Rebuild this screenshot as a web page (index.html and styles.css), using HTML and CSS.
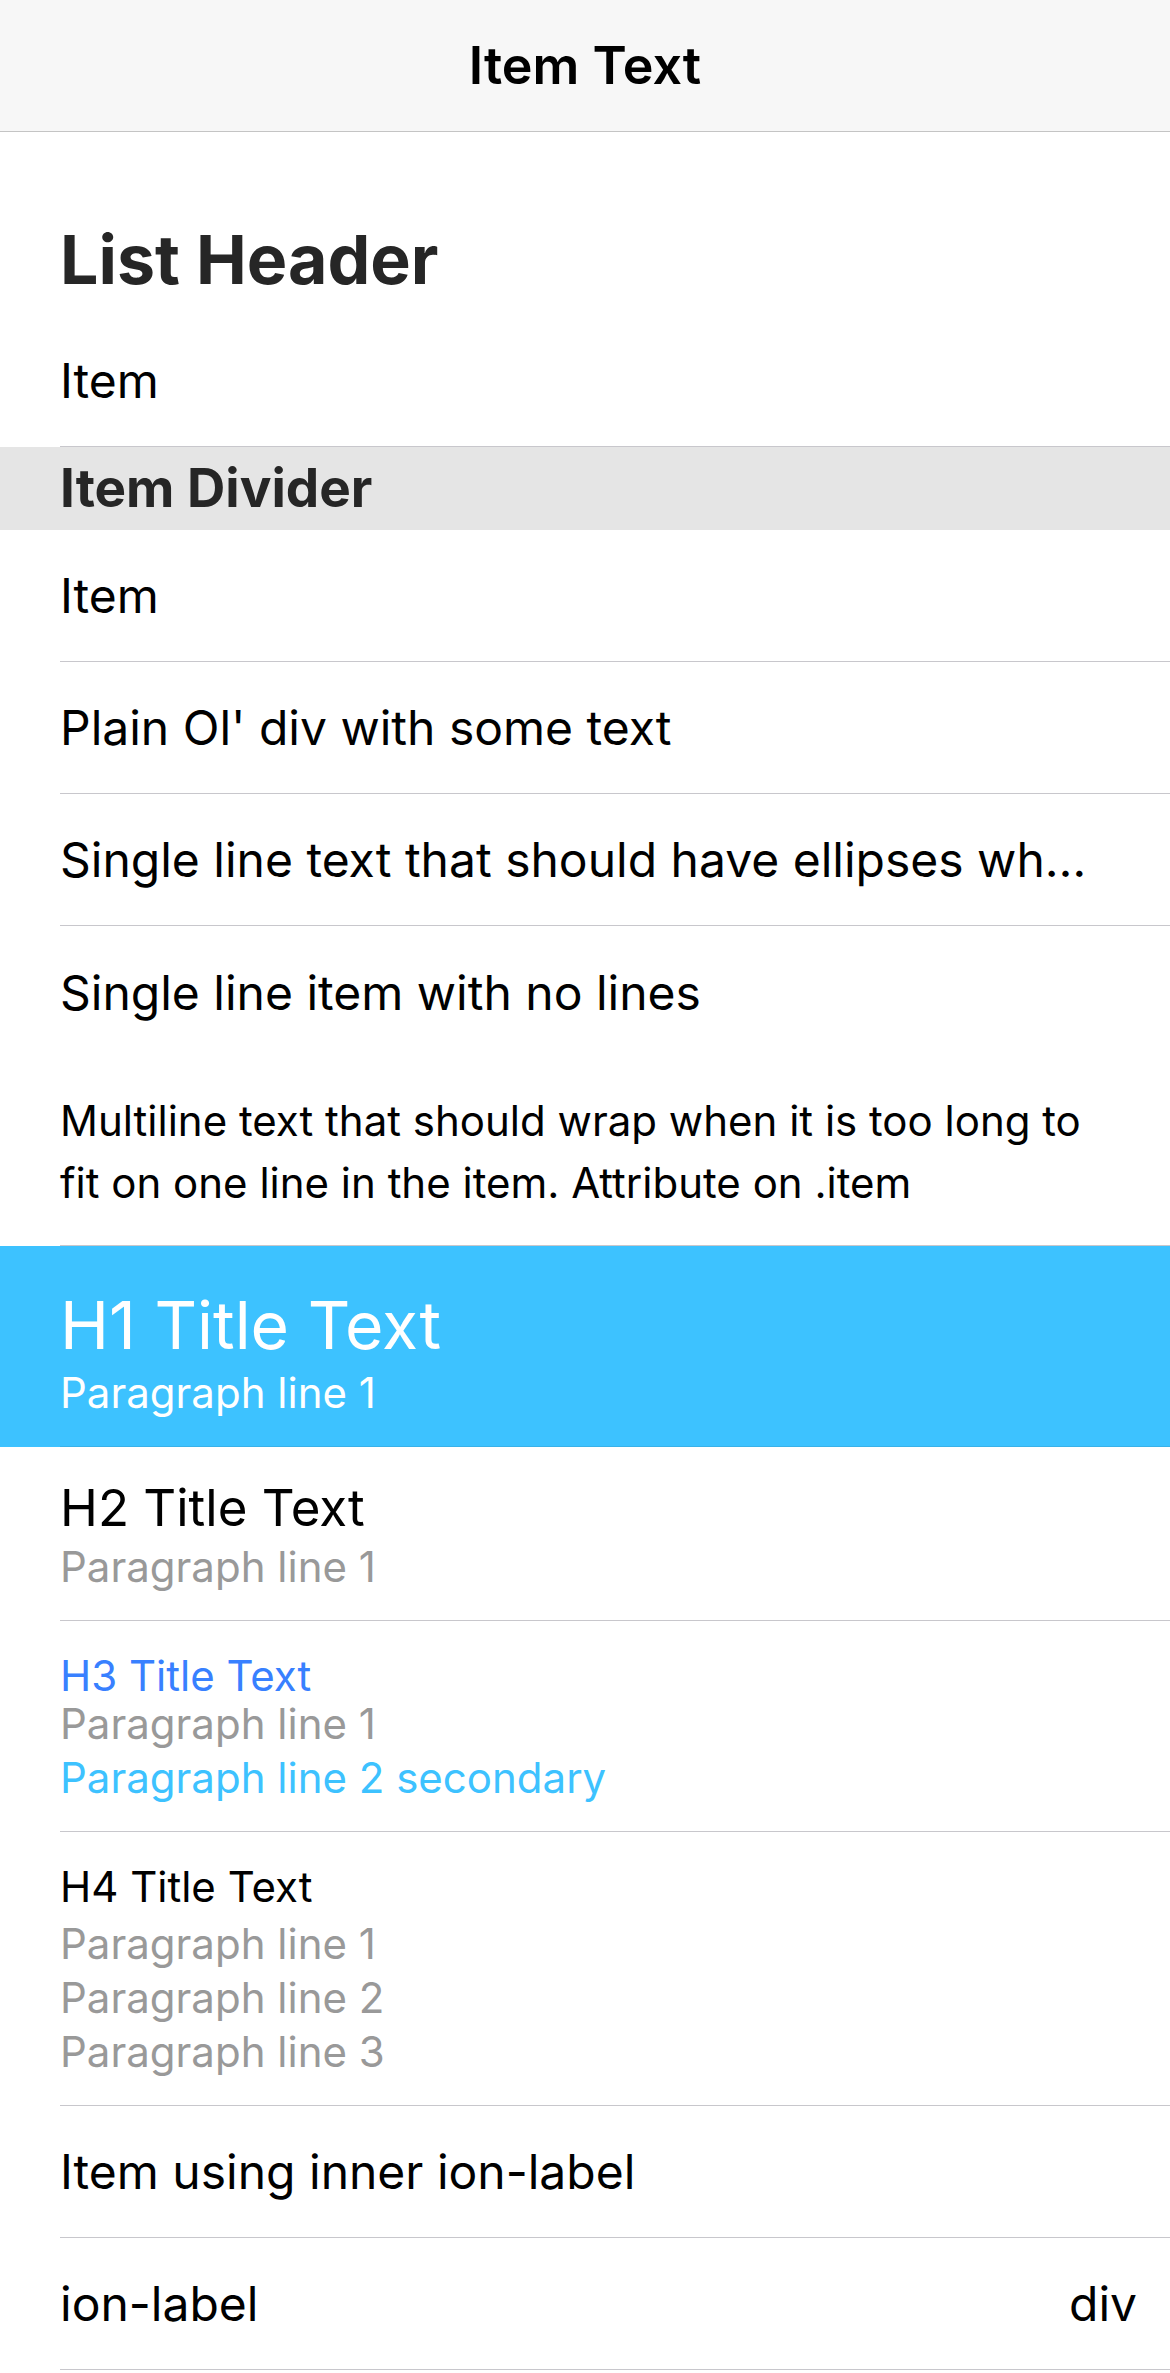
FILE: index.html
```html
<!DOCTYPE html>
<html lang="en">
<head>
<meta charset="utf-8">
<title>Item Text</title>
<link rel="stylesheet" href="styles.css">
</head>
<body>
<header class="toolbar">
  <div class="toolbar-title">Item Text</div>
</header>
<main class="content">
  <div class="list">
    <div class="list-header">List Header</div>
    <div class="item"><div class="inner"><span class="label">Item</span></div></div>
    <div class="item-divider">Item Divider</div>
    <div class="item"><div class="inner"><span class="label">Item</span></div></div>
    <div class="item"><div class="inner"><span class="label">Plain Ol' div with some text</span></div></div>
    <div class="item"><div class="inner"><span class="label">Single line text that should have ellipses when it doesn't fit in the item</span></div></div>
    <div class="item no-lines"><div class="inner"><span class="label">Single line item with no lines</span></div></div>
    <div class="item"><div class="inner wrap"><span class="label">Multiline text that should wrap when it is too long to fit on one line in the item. Attribute on .item</span></div></div>
    <div class="item item-secondary"><div class="inner multi">
      <h1 class="t1">H1 Title Text</h1>
      <p class="para">Paragraph line 1</p>
    </div></div>
    <div class="item"><div class="inner multi">
      <h2 class="t2">H2 Title Text</h2>
      <p class="para">Paragraph line 1</p>
    </div></div>
    <div class="item"><div class="inner multi">
      <h3 class="t3">H3 Title Text</h3>
      <p class="para">Paragraph line 1</p>
      <p class="para secondary">Paragraph line 2 secondary</p>
    </div></div>
    <div class="item"><div class="inner multi">
      <h4 class="t4">H4 Title Text</h4>
      <p class="para">Paragraph line 1</p>
      <p class="para">Paragraph line 2</p>
      <p class="para">Paragraph line 3</p>
    </div></div>
    <div class="item"><div class="inner"><span class="label">Item using inner ion-label</span></div></div>
    <div class="item"><div class="inner split"><span class="label">ion-label</span><span class="end">div</span></div></div>
  </div>
</main>
</body>
</html>
```

FILE: styles.css
```css
html, body {
  margin: 0;
  padding: 0;
  background: #ffffff;
}

body {
  font-family: "Inter", "Liberation Sans", sans-serif;
  color: #000000;
  -webkit-font-smoothing: antialiased;
}

.toolbar {
  height: 131px;
  background: #f7f7f7;
  border-bottom: 1px solid #c4c4c4;
  display: flex;
  align-items: center;
  justify-content: center;
}

.toolbar-title {
  font-size: 52px;
  font-weight: 600;
  line-height: 131px;
  color: #000;
}

.list-header {
  padding: 86px 60px 15px 60px;
  font-size: 68px;
  font-weight: 700;
  line-height: 82px;
  color: #262626;
}

.item {
  padding-left: 60px;
  background: #fff;
}

.inner {
  min-height: 131px;
  border-bottom: 1px solid #c8c7cc;
  display: flex;
  align-items: center;
  padding-right: 72px;
  font-size: 48px;
  line-height: 131px;
}

.label {
  min-width: 0;
  white-space: nowrap;
  overflow: hidden;
  text-overflow: ellipsis;
}

.no-lines .inner {
  border-bottom: none;
  min-height: 132px;
}

.inner.wrap {
  display: block;
  min-height: 0;
  padding-top: 32px;
  padding-bottom: 31px;
  font-size: 42px;
  line-height: 62px;
}

.inner.wrap .label {
  white-space: normal;
  overflow: visible;
}

.inner.split {
  justify-content: space-between;
  padding-right: 33px;
}

.item-divider {
  height: 83px;
  padding-left: 60px;
  background: #e5e5e5;
  font-size: 53px;
  font-weight: 700;
  line-height: 83px;
  color: #262626;
}

.inner.multi {
  display: block;
  min-height: 0;
  padding-top: 32px;
  padding-bottom: 24px;
  line-height: normal;
}

.t1, .t2, .t3, .t4, .para {
  margin: 0;
  font-weight: 400;
}

.t1 {
  font-size: 66px;
  line-height: 76px;
  margin-top: 9px;
  margin-bottom: 5px;
}

.t2 {
  font-size: 51px;
  line-height: 58px;
  margin-bottom: 5px;
}

.t3 {
  font-size: 42px;
  line-height: 46px;
  color: #3880ff;
}

.t4 {
  font-size: 42px;
  line-height: 46px;
  margin-bottom: 9px;
}

.para {
  font-size: 42px;
  line-height: 50px;
  margin-bottom: 4px;
  color: #999999;
}

.para.secondary {
  color: #3dc2ff;
}

.item-secondary {
  background: #3dc2ff;
  color: #ffffff;
}

.item-secondary .inner {
  border-bottom-color: #39b1e8;
}

.item-secondary .para {
  color: #ffffff;
}
```
